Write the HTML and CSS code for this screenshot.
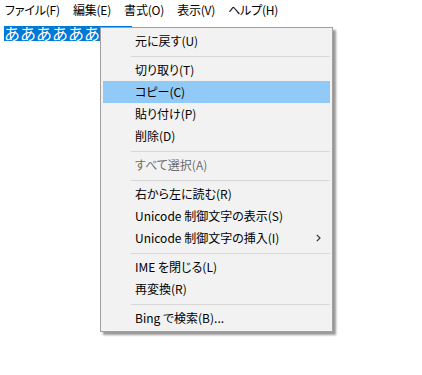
FILE: index.html
```html
<!DOCTYPE html>
<html lang="ja">
<head>
  <meta charset="UTF-8" />
  <title>メモ帳</title>
  <link rel="stylesheet" href="styles.css">
</head>
<body>
  <div class="window">
    <div class="menubar">
      <span class="menubar-item">ファイル(F)</span>
      <span class="menubar-item">編集(E)</span>
      <span class="menubar-item">書式(O)</span>
      <span class="menubar-item">表示(V)</span>
      <span class="menubar-item">ヘルプ(H)</span>
    </div>
    <div class="editor">
      <span class="selection">ああああああああ</span>
    </div>

    <!-- 右クリックメニュー -->
    <div class="context-menu">
      <div class="menu-item">元に戻す(U)</div>
      <div class="menu-sep"></div>
      <div class="menu-item">切り取り(T)</div>
      <div class="menu-item hover">コピー(C)</div>
      <div class="menu-item">貼り付け(P)</div>
      <div class="menu-item">削除(D)</div>
      <div class="menu-sep"></div>
      <div class="menu-item disabled">すべて選択(A)</div>
      <div class="menu-sep"></div>
      <div class="menu-item">右から左に読む(R)</div>
      <div class="menu-item">Unicode 制御文字の表示(S)</div>
      <div class="menu-item has-sub">
        <span>Unicode 制御文字の挿入(I)</span>
        <svg class="sub-arrow" width="5" height="8" viewBox="0 0 5 8">
          <path d="M0.8 0.8 L4 4 L0.8 7.2" fill="none" stroke="#333" stroke-width="1.2"/>
        </svg>
      </div>
      <div class="menu-sep"></div>
      <div class="menu-item">IME を閉じる(L)</div>
      <div class="menu-item">再変換(R)</div>
      <div class="menu-sep"></div>
      <div class="menu-item">Bing で検索(B)...</div>
    </div>
  </div>
</body>
</html>
```

FILE: styles.css
```css
html, body {
  margin: 0; padding: 0; height: 100%;
  background: #fff;
  font-family: "Noto Sans CJK JP", "Noto Sans", sans-serif;
  font-feature-settings: "palt";
  color: #000;
  overflow: hidden;
}
.window {
  position: relative;
  height: 100%;
}
.menubar {
  display: flex; gap: 13px;
  height: 20px; line-height: 20px;
  padding-left: 5px;
  font-size: 12px;
  letter-spacing: -0.2px;
}
.editor {
  padding: 1px 0 0 4px;
  height: 16px;
}
.selection {
  display: inline-block;
  height: 15px; line-height: 15px;
  font-size: 16px;
  font-feature-settings: normal;
  background: #0078d7; color: #fff;
  overflow: visible;
}
.context-menu {
  position: absolute; left: 100px; top: 27px;
  width: 227px;
  padding: 2px;
  background: #f2f2f2;
  border: 1px solid #a0a0a0;
  box-shadow: 3px 3px 2px rgba(0,0,0,0.4);
  font-size: 12px;
}
.menu-item {
  height: 22px; line-height: 22px;
  padding: 0 9px 0 32px;
  white-space: nowrap;
}
.menu-item.hover { background: #91c9f7; }
.menu-item.disabled { color: #6d6d6d; }
.menu-item.has-sub {
  display: flex; justify-content: space-between; align-items: center;
}
.sub-arrow { display: block; }
.menu-sep {
  height: 1px;
  margin: 4px 0 2px 28px;
  background: #d7d7d7;
}
```
